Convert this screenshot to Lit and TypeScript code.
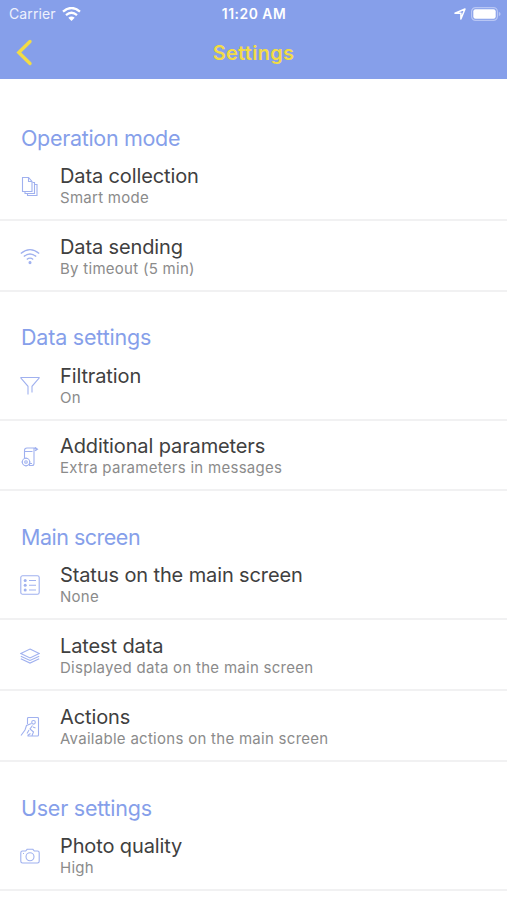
import { LitElement, html, css, svg } from "lit";
import { customElement } from "lit/decorators.js";
import { styleMap } from "lit/directives/style-map.js";

const icons = {
  files: svg`<path d="M2.500 1.500h6l3.500 4v10h-9.500z"/><path d="M8.500 1.500v4h3.500M5 15.500v2h9.500v-11h-2M7.500 17.500v2h9.500v-11h-2.500"/>`,
  wifi: svg`<path d="M.8 6.500q9.200-7.600 18.400 0M3.800 9.600q6.200-5.200 12.400 0M6.800 12.400q3.200-2.600 6.400 0" stroke-width="1.300"/><circle cx="10" cy="15.600" r="1" fill="currentColor"/>`,
  filter: svg`<path d="M8 18.500v-8.200L.9 2v-.5h18.200V2L12 10.300v6.200"/>`,
  params: svg`<path d="M4.500 11V3.500q0-2.500 2.500-2.500H16M14 1.500v15q0 2-2 2H9.500v-2H12M4.500 4.500h8M14 1q2 0 2.500 2.500M15 .3l2.500 2-2.500 1.500"/><circle cx="6" cy="15" r="3.700"/><circle cx="6" cy="15" r="1.300"/><path d="M6 10.500v1.500M6 18v1.500M1.500 15H3M9 15h1.500"/>`,
  list: svg`<rect x=".8" y=".8" width="18.400" height="18.400" rx="1.800"/><path d="M9 5.500h7M9 10.200h7M9 15h7"/><g fill="currentColor" stroke="none"><circle cx="5.200" cy="5.500" r="1.500"/><circle cx="5.200" cy="10.200" r="1.500"/><circle cx="5.200" cy="15" r="1.500"/></g>`,
  layers: svg`<path d="M10 3l9.200 4.500L10 12 .8 7.500zM.8 10.200l9.200 4.300 9.200-4.300M.8 12.800l9.200 4.300 9.200-4.300"/>`,
  actions: svg`<path d="M7.500 7V1.500q0-1 1-1h9q1 0 1 1v16.500q0 1-1 1H7.500M1 18.500l4-5.500 1.500-4.500 5-2M12.500 8.500l-2.500 3.500 3.500 3-1.500 3.500M9 13l-2 3.500M7.500 18.500l3-2M13 10l2.500 1"/><circle cx="13.500" cy="5.300" r="1.800"/>`,
  camera: svg`<path d="M2.500 5h3.200l1.400-1.700h5.800L14.300 5h3.200q1.700 0 1.700 1.700v8.600q0 1.700-1.700 1.700h-15Q.8 17 .8 15.300V6.700Q.8 5 2.500 5z"/><circle cx="10" cy="10.700" r="4"/><path d="M3 7.500h1"/>`,
};

type Row = { icon: keyof typeof icons; title: string; note: string };

const sections: { name: string; tracking: number; rows: Row[] }[] = [
  {
    name: "Operation mode",
    tracking: -0.32,
    rows: [
      { icon: "files", title: "Data collection", note: "Smart mode" },
      { icon: "wifi", title: "Data sending", note: "By timeout (5 min)" },
    ],
  },
  {
    name: "Data settings",
    tracking: -0.2,
    rows: [
      { icon: "filter", title: "Filtration", note: "On" },
      { icon: "params", title: "Additional parameters", note: "Extra parameters in messages" },
    ],
  },
  {
    name: "Main screen",
    tracking: -0.5,
    rows: [
      { icon: "list", title: "Status on the main screen", note: "None" },
      { icon: "layers", title: "Latest data", note: "Displayed data on the main screen" },
      { icon: "actions", title: "Actions", note: "Available actions on the main screen" },
    ],
  },
  {
    name: "User settings",
    tracking: -0.24,
    rows: [{ icon: "camera", title: "Photo quality", note: "High" }],
  },
];

@customElement("app-root")
export class AppRoot extends LitElement {
  static styles = css`
    :host {
      display: block;
      height: 900px;
      overflow: hidden;
      background: #fff;
      font-family: Inter, "Liberation Sans", sans-serif;
    }
    svg { display: block; }
    .top { height: 79px; background: #869fea; box-sizing: border-box; }
    .status {
      height: 27px;
      display: grid;
      grid-template-columns: 1fr auto 1fr;
      align-items: center;
      padding: 0 6px 0 9px;
      color: #fff;
    }
    .carrier { display: flex; align-items: center; gap: 6px; font-size: 14px; color: #eef1fd; letter-spacing: 0.1px; }
    .time { font-size: 13.8px; font-weight: 600; letter-spacing: 0.55px; margin-right: 2px; }
    .power { display: flex; align-items: center; justify-content: flex-end; gap: 5px; }
    .bar {
      height: 52px;
      display: grid;
      grid-template-columns: 1fr auto 1fr;
      align-items: center;
      padding: 0 16px;
      color: #f2dc45;
    }
    .heading { font-size: 20px; font-weight: 600; line-height: 52px; letter-spacing: 0.3px; }
    .list { padding-top: 13px; }
    .name {
      height: 58px;
      box-sizing: border-box;
      padding: 32.6px 21px 0;
      line-height: 26px;
      font-size: 21.5px;
      color: #869fea;
    }
    .row {
      height: 70.85px;
      box-sizing: border-box;
      display: flex;
      border-bottom: 2px solid #f1f1f2;
    }
    .icon { width: 20px; height: 20px; padding: 26px 20px 0; color: #a0b1ef; }
    .text { padding-top: 12.9px; }
    .title { font-size: 20px; line-height: 26px; color: #404040; letter-spacing: -0.12px; }
    .note { font-size: 15px; line-height: 18px; color: #8b8b8b; letter-spacing: 0.28px; }
  `;

  render() {
    return html`
      <header class="top">
        <div class="status">
          <div class="carrier">
            <span>Carrier</span>
            <svg width="19" height="14" viewBox="0 0 19 14" fill="none" stroke="#fff" stroke-width="2.300">
              <path d="M1 4.600q8.500-7.200 17 0M4 8.100q5.500-4.600 11 0" />
              <path d="M6.300 10.700q3.200-2.600 6.400 0L9.500 14z" fill="#fff" stroke="none" />
            </svg>
          </div>
          <div class="time">11:20 AM</div>
          <div class="power">
            <svg width="12" height="12" viewBox="0 0 12 12" fill="none" stroke="#fff" stroke-width="1.500" stroke-linejoin="round">
              <path d="M1 5.200L11 1 6.900 11V5.300z" />
            </svg>
            <svg width="30" height="14" viewBox="0 0 30 14">
              <rect x=".6" y=".6" width="25.800" height="12.800" rx="4" fill="none" stroke="#b8c6f4" stroke-width="1.200" />
              <rect x="2.300" y="2.300" width="22.400" height="9.400" rx="2.200" fill="#fff" />
              <path d="M27.800 4.700q1.800.8 1.800 2.300t-1.800 2.300z" fill="#b8c6f4" />
            </svg>
          </div>
        </div>
        <div class="bar">
          <svg width="17" height="28" viewBox="0 0 17 28" fill="none" stroke="currentColor" stroke-width="3.400" stroke-linecap="round">
            <path d="M14 2.500L2.800 13.500l11.200 11" />
          </svg>
          <div class="heading">Settings</div>
        </div>
      </header>
      <main class="list">
        ${sections.map(
          (s) => html`
            <section>
              <div class="name" style=${styleMap({ letterSpacing: `${s.tracking}px` })}>${s.name}</div>
              ${s.rows.map(
                (r) => html`
                  <div class="row">
                    <div class="icon">
                      <svg width="20" height="20" viewBox="0 0 20 20" fill="none" stroke="currentColor" stroke-width="1.100">${icons[r.icon]}</svg>
                    </div>
                    <div class="text">
                      <div class="title">${r.title}</div>
                      <div class="note">${r.note}</div>
                    </div>
                  </div>
                `
              )}
            </section>
          `
        )}
      </main>
    `;
  }
}
